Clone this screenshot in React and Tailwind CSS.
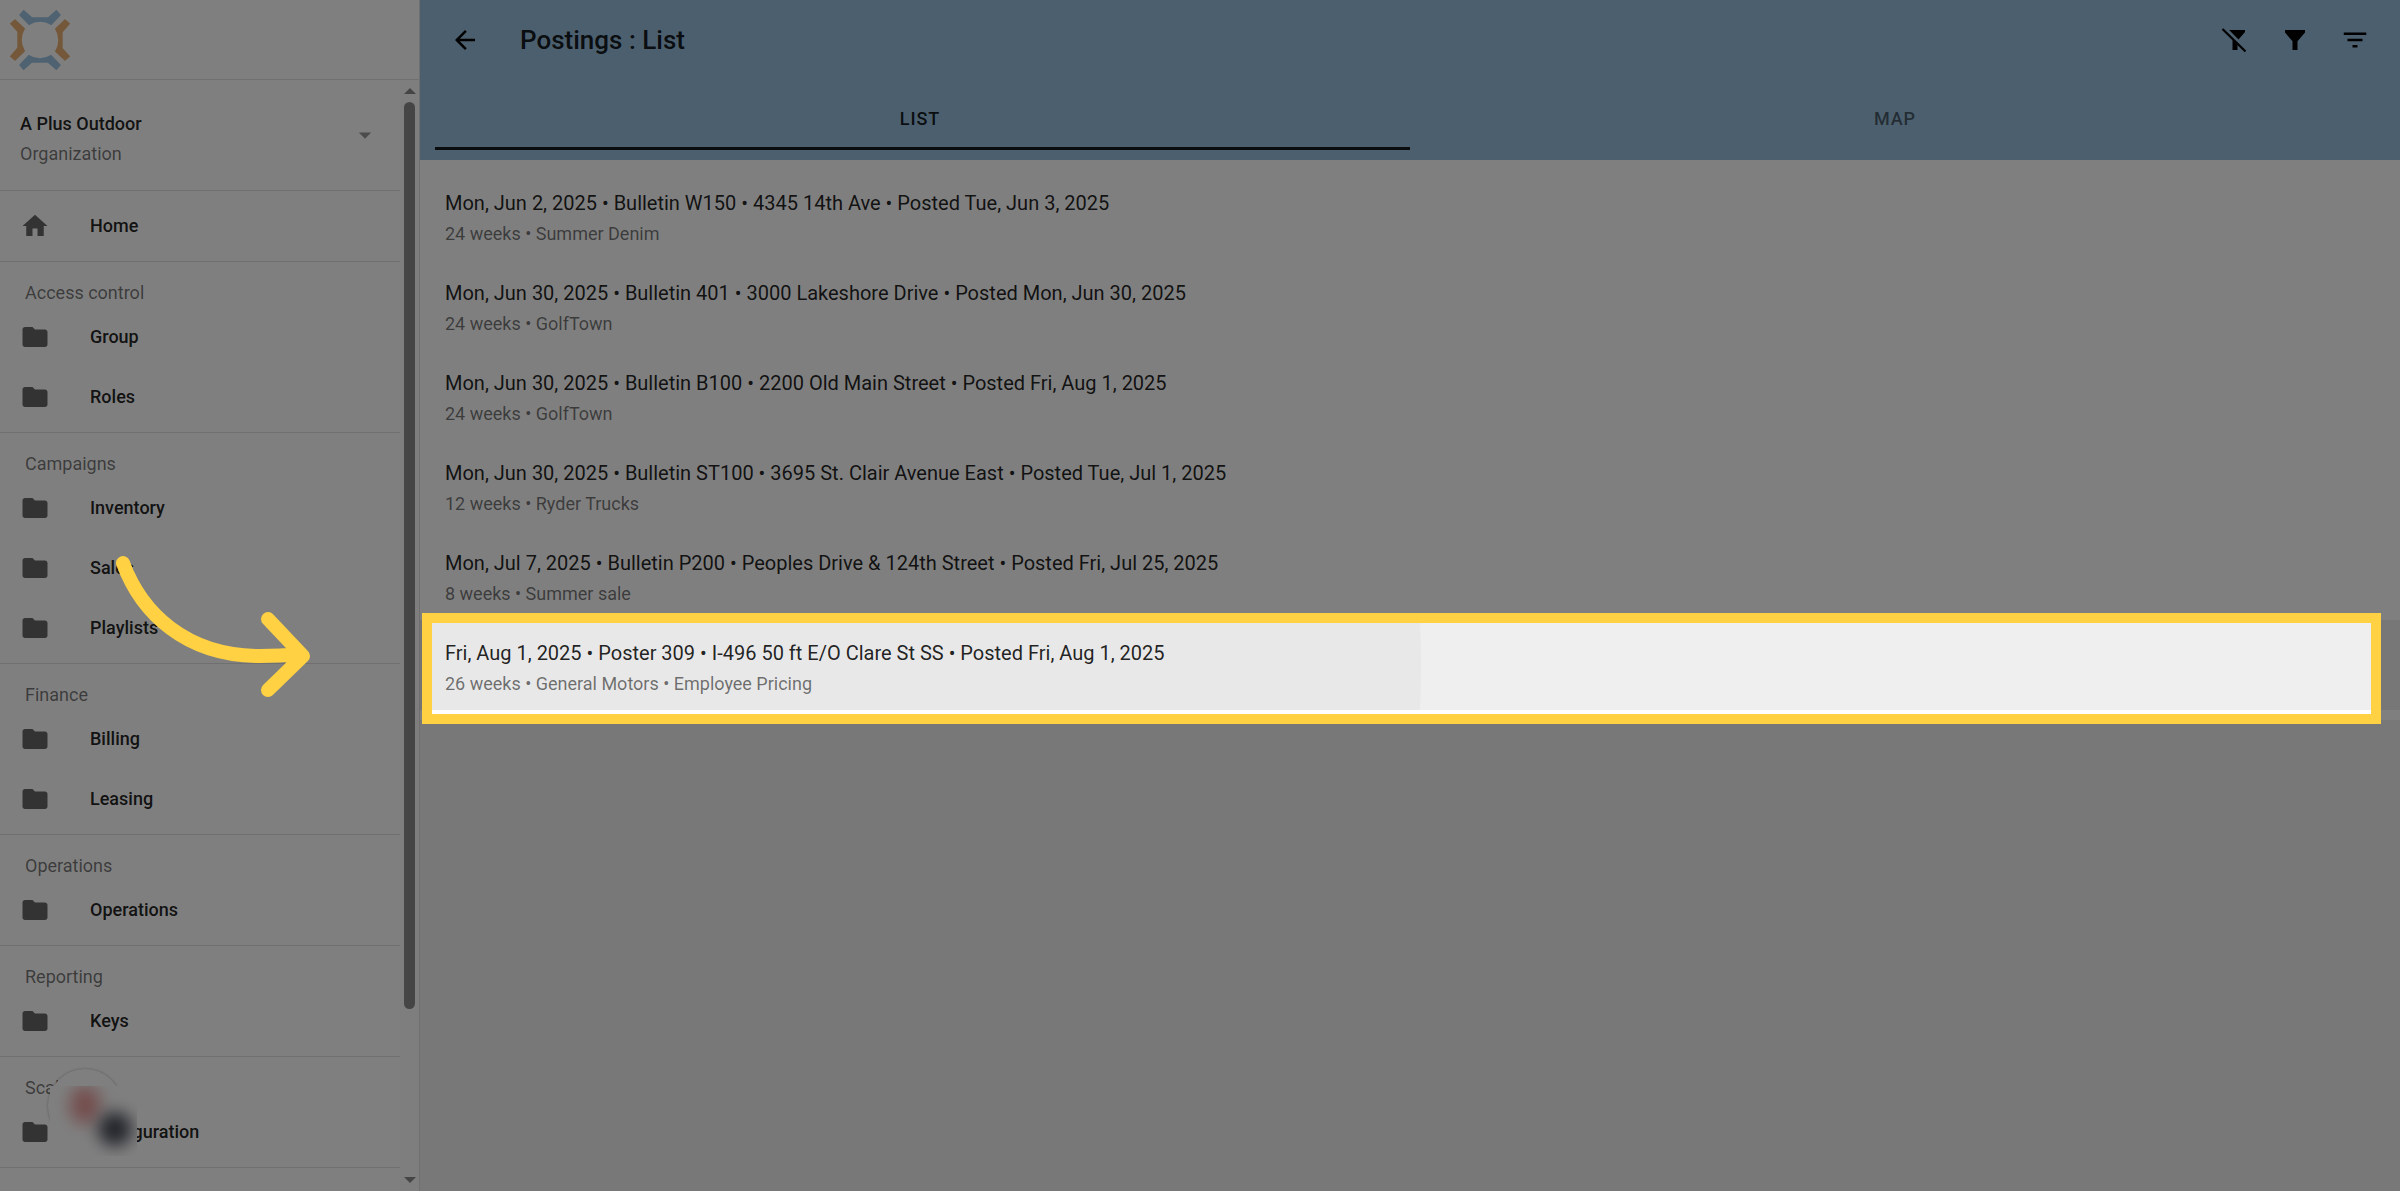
import React, { useState } from "react";
import { MdArrowBack, MdArrowDropDown, MdFilterList, MdFolder, MdHome } from "react-icons/md";

const sections = [
  { title: "Access control", items: ["Group", "Roles"] },
  { title: "Campaigns", items: ["Inventory", "Sales", "Playlists"] },
  { title: "Finance", items: ["Billing", "Leasing"] },
  { title: "Operations", items: ["Operations"] },
  { title: "Reporting", items: ["Keys"] },
  { title: "Scala", items: ["Configuration"] },
];

const postings = [
  { title: "Mon, Jun 2, 2025 • Bulletin W150 • 4345 14th Ave • Posted Tue, Jun 3, 2025", detail: "24 weeks • Summer Denim" },
  { title: "Mon, Jun 30, 2025 • Bulletin 401 • 3000 Lakeshore Drive • Posted Mon, Jun 30, 2025", detail: "24 weeks • GolfTown" },
  { title: "Mon, Jun 30, 2025 • Bulletin B100 • 2200 Old Main Street • Posted Fri, Aug 1, 2025", detail: "24 weeks • GolfTown" },
  { title: "Mon, Jun 30, 2025 • Bulletin ST100 • 3695 St. Clair Avenue East • Posted Tue, Jul 1, 2025", detail: "12 weeks • Ryder Trucks" },
  { title: "Mon, Jul 7, 2025 • Bulletin P200 • Peoples Drive & 124th Street • Posted Fri, Jul 25, 2025", detail: "8 weeks • Summer sale" },
  { title: "Fri, Aug 1, 2025 • Poster 309 • I-496 50 ft E/O Clare St SS • Posted Fri, Aug 1, 2025", detail: "26 weeks • General Motors • Employee Pricing", active: true },
];

const LOGO_ARM = "M60 45 L71 32 L96 54 L145 54 L169 32 L180 45 L154 73 A62 62 0 0 0 87 73 Z";

const Logo = () => (
  <svg viewBox="30 30 180 180" className="size-15" strokeWidth="4" strokeLinejoin="round" aria-hidden="true">
    <g fill="#9cc4e2" stroke="#9cc4e2">
      <path d={LOGO_ARM} />
      <path d={LOGO_ARM} transform="rotate(180 120 120)" />
    </g>
    <g fill="#e8b072" stroke="#e8b072">
      <path d={LOGO_ARM} transform="rotate(90 120 120)" />
      <path d={LOGO_ARM} transform="rotate(270 120 120)" />
    </g>
  </svg>
);

const FilterIcon = () => (
  <svg viewBox="0 0 24 24" className="size-[30px]" fill="currentColor" aria-hidden="true">
    <path d="M4 4h16v2l-6 7v7h-4v-7L4 6z" />
  </svg>
);

const FilterOffIcon = () => (
  <svg viewBox="0 0 24 24" className="size-[30px]" fill="currentColor" aria-hidden="true">
    <path d="M7.3 4H20v1.5l-5.2 6.1zM10 12v8h4v-4z" />
    <path d="M2 3.2l18.4 18" stroke="currentColor" strokeWidth="1.8" />
  </svg>
);

const NavItem = ({ icon, label }) => (
  <a href="#" className="flex h-15 items-center px-5 text-black/60">
    {icon}
    <span className="ml-10 text-lg font-medium text-black/87">{label}</span>
  </a>
);

const Scrollbar = () => (
  <div className="flex w-[19px] shrink-0 flex-col items-center bg-[#fcfcfc] py-2" aria-hidden="true">
    <svg viewBox="0 0 12 6" className="h-[6px] w-3 fill-[#8b8b8b]"><path d="M0 6L6 0l6 6z" /></svg>
    <div className="my-2 w-full flex-1">
      <div className="mx-auto h-[85%] w-[11px] rounded-full bg-[#8b8b8b]"></div>
    </div>
    <svg viewBox="0 0 12 6" className="h-[6px] w-3 fill-[#8b8b8b]"><path d="M0 0l6 6 6-6z" /></svg>
  </div>
);

const Sidebar = () => (
  <aside className="relative flex h-full w-[420px] shrink-0 flex-col border-r border-black/12 bg-white">
    <div className="flex h-20 shrink-0 items-center border-b border-black/12 px-[10px]">
      <Logo />
    </div>
    <div className="flex min-h-0 flex-1">
      <nav className="min-w-0 flex-1 overflow-hidden">
        <button type="button" className="flex h-[110px] w-full items-center justify-between px-5 text-left">
          <span className="pt-2">
            <span className="block text-lg leading-[30px] font-medium text-black/87">A Plus Outdoor</span>
            <span className="block text-lg leading-[30px] text-black/54">Organization</span>
          </span>
          <MdArrowDropDown size={30} className="text-black/40" />
        </button>
        <div className="border-t border-black/12 py-[5px]">
          <NavItem icon={<MdHome size={30} />} label="Home" />
        </div>
        {sections.map((section) => (
          <section key={section.title} className="border-t border-black/12 py-[5px]">
            <h2 className="flex h-10 items-end pl-[25px] text-lg text-black/54">{section.title}</h2>
            {section.items.map((item) => (
              <NavItem key={item} icon={<MdFolder size={30} />} label={item} />
            ))}
          </section>
        ))}
        <div className="border-t border-black/12"></div>
      </nav>
      <Scrollbar />
    </div>

    {/* floating launcher */}
    <div className="absolute bottom-[35px] left-12 h-[87px] w-[89px]" aria-hidden="true">
      <div className="absolute top-0 left-0 size-[74px] rounded-full bg-white shadow-[0_0_3px_rgba(0,0,0,0.3)]"></div>
      <div className="absolute top-[17px] left-[2px] h-[70px] w-[87px] overflow-hidden bg-white">
        <div className="absolute top-0 left-[20px] h-[38px] w-[30px] rounded-full bg-[#ea9c9c] blur-[8px]"></div>
        <div className="absolute top-[26px] left-[48px] h-[34px] w-[34px] rounded-full bg-[#484c58] blur-[8px]"></div>
      </div>
    </div>
  </aside>
);

const PostingRow = ({ posting }) => (
  <li className="relative">
    <button
      type="button"
      className={`relative block h-[90px] w-full overflow-hidden px-[25px] pt-2 text-left ${posting.active ? "bg-[#efefef]" : "bg-white"}`}
    >
      {posting.active && (
        <span className="absolute top-1/2 -left-[999px] size-[2000px] -translate-y-1/2 rounded-full bg-[#e8e8e8]"></span>
      )}
      <span className="relative block text-xl leading-[30px] text-black/87">{posting.title}</span>
      <span className="relative block text-lg leading-[32px] text-black/54">{posting.detail}</span>
    </button>
    {posting.active && (
      <div className="pointer-events-none absolute -top-[7px] right-[19px] -bottom-[14px] left-[2px] z-20 border-10 border-[#ffd143] shadow-[0_0_0_3000px_rgba(0,0,0,0.5)]">
        <svg viewBox="0 0 200 146" className="absolute right-full -top-[70px] mr-[118px] h-[146px] w-[200px]" fill="none" stroke="#ffd143" strokeWidth="14" strokeLinecap="round" strokeLinejoin="round" aria-hidden="true">
          <path d="M9 10C27 59 71 103 146 103Q166 103 186 101M154 66l35 37-35 34" />
        </svg>
      </div>
    )}
  </li>
);

const App = () => {
  const [tab, setTab] = useState("LIST");

  return (
    <div className="flex h-screen overflow-hidden bg-[#f0f0f0] font-[Roboto,sans-serif]">
      <Sidebar />
      <main className="min-w-0 flex-1">
        <header className="h-40 bg-[#98bedc] text-black">
          <div className="flex h-20 items-center px-[30px]">
            <button type="button" aria-label="Back"><MdArrowBack size={30} /></button>
            <h1 className="ml-10 flex-1 text-[26px] font-medium text-black/87">Postings : List</h1>
            <div className="flex gap-[30px]">
              <button type="button" aria-label="Clear filters"><FilterOffIcon /></button>
              <button type="button" aria-label="Filter"><FilterIcon /></button>
              <button type="button" aria-label="Sort"><MdFilterList size={30} /></button>
            </div>
          </div>
          <div className="grid grid-cols-2 px-[15px] pt-[10px]" role="tablist">
            {["LIST", "MAP"].map((name) => (
              <button
                key={name}
                type="button"
                role="tab"
                aria-selected={tab === name}
                onClick={() => setTab(name)}
                className={`h-15 border-b-3 pr-[5px] text-lg font-medium tracking-wider ${tab === name ? "border-black/87 text-black/87" : "border-transparent text-black/54"}`}
              >
                {name}
              </button>
            ))}
          </div>
        </header>
        <ul className="bg-white py-[10px]">
          {postings.map((posting) => (
            <PostingRow key={posting.title} posting={posting} />
          ))}
        </ul>
      </main>
    </div>
  );
};

export default App;
